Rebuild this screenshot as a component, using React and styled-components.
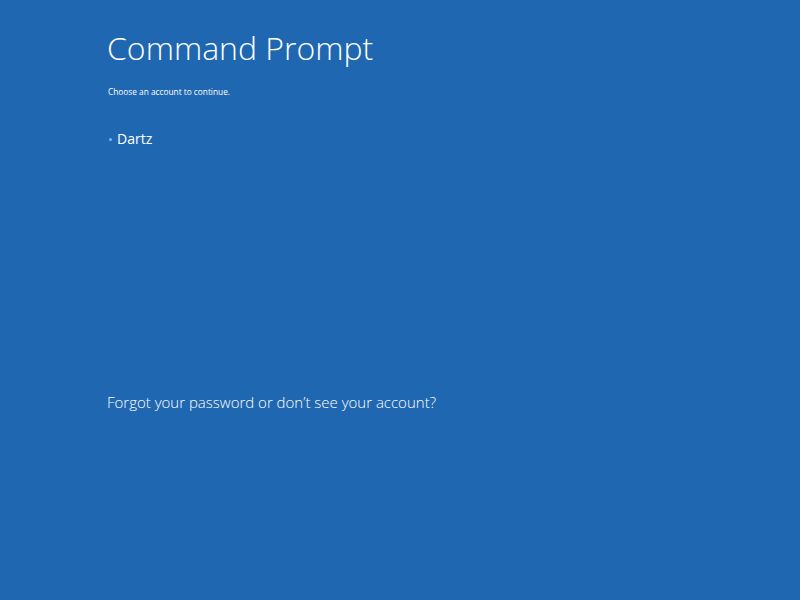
import React from 'react'
import styled, { createGlobalStyle } from 'styled-components';

const GlobalStyle = createGlobalStyle`
    html, body {
        margin: 0;
        padding: 0;
        background: #2067b1;
    }
`;

export default function App() {
    return (
        <Screen>
            <GlobalStyle />
            <div className='content'>
                <h1>Command Prompt</h1>
                <p className='subtitle'>Choose an account to continue.</p>
                <ul className='accounts'>
                    <li>Dartz</li>
                </ul>
                <a className='forgot' href='#'>Forgot your password or don’t see your account?</a>
            </div>
        </Screen>
    );
}

const Screen = styled.div`
    width: 800px;
    height: 600px;
    background: #2067b1;
    color: white;
    font-family: "Open Sans", "Liberation Sans", sans-serif;
    overflow: hidden;

    .content{
        padding: 28px 0 0 107px;
        display: flex;
        flex-direction: column;
        align-items: flex-start;

        h1{
            margin: 0;
            font-size: 32px;
            font-weight: 300;
            line-height: 40px;
        }

        .subtitle{
            margin: 18px 0 0 1px;
            font-size: 8.3px;
            line-height: 12px;
        }

        .accounts{
            list-style: none;
            margin: 31px 0 0 0;
            padding: 0;

            li{
                display: flex;
                align-items: center;
                gap: 5px;
                font-size: 14px;
                line-height: 20px;

                &::before{
                    content: '';
                    width: 3px;
                    height: 3px;
                    border-radius: 50%;
                    background: #7fb6ee;
                    margin-left: 2px;
                }
            }
        }

        .forgot{
            margin-top: 243px;
            color: white;
            text-decoration: none;
            font-size: 15px;
            font-weight: 300;
            line-height: 20px;
        }
    }
`;
